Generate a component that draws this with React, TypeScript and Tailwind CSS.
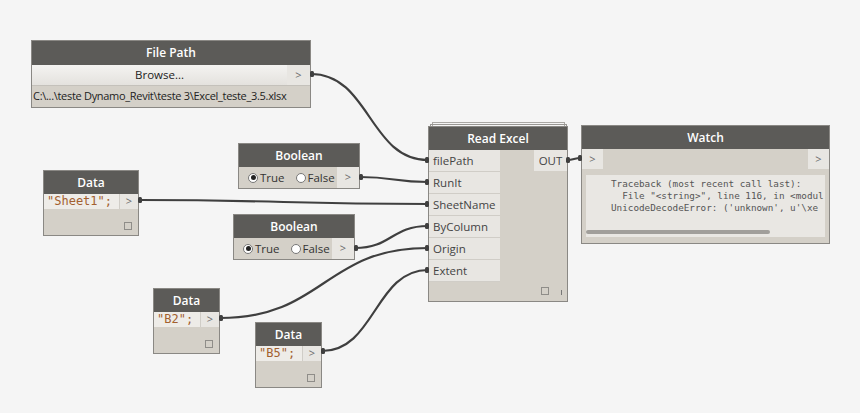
import React from 'react';

const HEAD = 'bg-[#5c5b58] text-white text-[12px] font-semibold flex items-center justify-center';
const FONT = { fontFamily: '"Open Sans", "Noto Sans", sans-serif' };
const MONO = '[font-family:"DejaVu_Sans_Mono","Liberation_Mono",monospace]';

type Wire = [number, number, number, number];

const wires: Wire[] = [
  [311, 74, 428, 160],
  [360, 177, 428, 182],
  [139, 200, 428, 204],
  [355, 248, 428, 226],
  [220, 318, 428, 248],
  [322, 351, 428, 270],
  [567, 160, 581, 158],
];

const wirePath = ([x1, y1, x2, y2]: Wire) => {
  const dx = Math.max((x2 - x1) / 2, 6);
  return `M${x1} ${y1} C${x1 + dx} ${y1} ${x2 - dx} ${y2} ${x2} ${y2}`;
};

const Arrow = ({ className = '' }: { className?: string }) => (
  <div className={`flex items-center justify-center text-[11px] text-[#6b6b6b] bg-[#e8e6e2] ${className}`}>&gt;</div>
);

const Radio = ({ on, label }: { on?: boolean; label: string }) => (
  <div className="flex items-center gap-[2px]">
    <span className="w-[10px] h-[10px] rounded-full bg-white border border-[#777] flex items-center justify-center">
      {on && <span className="w-[5px] h-[5px] rounded-full bg-[#222]" />}
    </span>
    <span className="text-[11.5px] text-[#333]">{label}</span>
  </div>
);

const BooleanNode = ({ left, top }: { left: number; top: number }) => (
  <div className="absolute w-[122px] border border-[#8a8884] bg-[#d4d0c8] flex flex-col" style={{ left, top }}>
    <div className={`${HEAD} h-[23px]`}>Boolean</div>
    <div className="flex h-[21px]">
      <div className="flex-1 flex items-center gap-[11px] pl-[9px]">
        <Radio on label="True" />
        <Radio label="False" />
      </div>
      <Arrow className="w-[22px]" />
    </div>
  </div>
);

const DataNode = ({ left, top, width, height, value }: { left: number; top: number; width: number; height: number; value: string }) => (
  <div className="absolute border border-[#8a8884] bg-[#d4d0c8] flex flex-col" style={{ left, top, width, height }}>
    <div className={`${HEAD} h-[23px] shrink-0`}>Data</div>
    <div className="flex h-[15px] shrink-0">
      <div className={`flex-1 bg-[#eeece8] text-[12px] leading-[15px] text-[#a3602f] pl-[3px] border-r border-[#d0cdc7] whitespace-nowrap overflow-hidden ${MONO}`}>{value}</div>
      <Arrow className="w-[18px]" />
    </div>
    <div className="flex-1 flex items-end justify-end pr-[6px] pb-[5px]">
      <span className="w-[8px] h-[8px] border border-[#8f8d89]" />
    </div>
  </div>
);

const inputs = ['filePath', 'RunIt', 'SheetName', 'ByColumn', 'Origin', 'Extent'];

export default function App() {
  return (
    <div className="relative w-[860px] h-[413px] bg-[#f5f5f5] overflow-hidden" style={FONT}>
      {/* File Path */}
      <div className="absolute left-[31px] top-[40px] w-[280px] border border-[#8a8884] bg-[#d4d0c8] flex flex-col">
        <div className={`${HEAD} h-[24px]`}>File Path</div>
        <div className="flex h-[21px] border-b border-[#c4c1bb]">
          <div className="flex-1 flex items-center justify-center text-[11.5px] text-[#222] bg-gradient-to-b from-[#f4f3f1] to-[#e4e2de]">Browse...</div>
          <Arrow className="w-[23px]" />
        </div>
        <div className="h-[21px] flex items-center pl-[1px] text-[11px] text-[#222] tracking-[-0.3px]">C:\...\teste Dynamo_Revit\teste 3\Excel_teste_3.5.xlsx</div>
      </div>

      <BooleanNode left={238} top={143} />
      <BooleanNode left={233} top={214} />

      <DataNode left={43} top={170} width={96} height={66} value={'"Sheet1";'} />
      <DataNode left={153} top={288} width={67} height={66} value={'"B2";'} />
      <DataNode left={255} top={322} width={67} height={66} value={'"B5";'} />

      {/* Read Excel */}
      <div className="absolute left-[432px] top-[122px] w-[133px] h-[4px] border-t border-x border-[#a9a7a3]" />
      <div className="absolute left-[430px] top-[124px] w-[137px] h-[3px] border-t border-x border-[#9a9894]" />
      <div className="absolute left-[428px] top-[126px] w-[140px] h-[176px] border border-[#8a8884] bg-[#d4d0c8] flex flex-col">
        <div className={`${HEAD} h-[23px] shrink-0`}>Read Excel</div>
        <div className="flex">
          <div className="w-[71px] flex flex-col">
            {inputs.map((p) => (
              <div key={p} className="h-[22px] flex items-center pl-[4px] bg-[#e8e6e2] border-b border-[#d0cdc7] text-[11.5px] text-[#444]">
                {p}
              </div>
            ))}
          </div>
          <div className="flex-1" />
          <div className="w-[33px] h-[21px] flex items-center justify-center bg-[#e8e6e2] text-[11.5px] text-[#444]">OUT</div>
        </div>
        <div className="flex-1 flex items-end justify-end gap-[12px] pr-[5px] pb-[5px]">
          <span className="w-[8px] h-[8px] border border-[#8f8d89] mb-[1px]" />
          <span className="w-[1px] h-[5px] bg-[#777] mb-[1px]" />
        </div>
      </div>

      {/* Watch */}
      <div className="absolute left-[581px] top-[125px] w-[249px] h-[119px] border border-[#8a8884] bg-[#d4d0c8] flex flex-col">
        <div className={`${HEAD} h-[23px] shrink-0`}>Watch</div>
        <div className="flex h-[20px] shrink-0">
          <Arrow className="w-[21px]" />
          <div className="flex-1" />
          <Arrow className="w-[21px]" />
        </div>
        <div className="mx-[4px] mt-[6px] h-[62px] bg-[#e9e7e3] overflow-hidden flex flex-col relative">
          <div className={`pl-[25px] pt-[3px] text-[9.3px] leading-[12px] text-[#555] whitespace-pre ${MONO}`}>
            <div>Traceback (most recent call last):</div>
            <div>{'  File "<string>", line 116, in <modul'}</div>
            <div>UnicodeDecodeError: ('unknown', u'\xe</div>
          </div>
          <div className="absolute left-0 bottom-[3px] w-[184px] h-[4px] rounded-[2px] bg-[#a19f9b]" />
        </div>
      </div>

      {/* wires */}
      <svg className="absolute inset-0 pointer-events-none" width={860} height={413}>
        {wires.map((w, i) => (
          <g key={i}>
            <path d={wirePath(w)} fill="none" stroke="#3f3f3f" strokeWidth={2.2} />
            <rect x={w[0] - 1} y={w[1] - 3} width={4} height={6} rx={1.5} fill="#3f3f3f" />
            <rect x={w[2] - 3} y={w[3] - 3} width={4} height={6} rx={1.5} fill="#3f3f3f" />
          </g>
        ))}
      </svg>
    </div>
  );
}
